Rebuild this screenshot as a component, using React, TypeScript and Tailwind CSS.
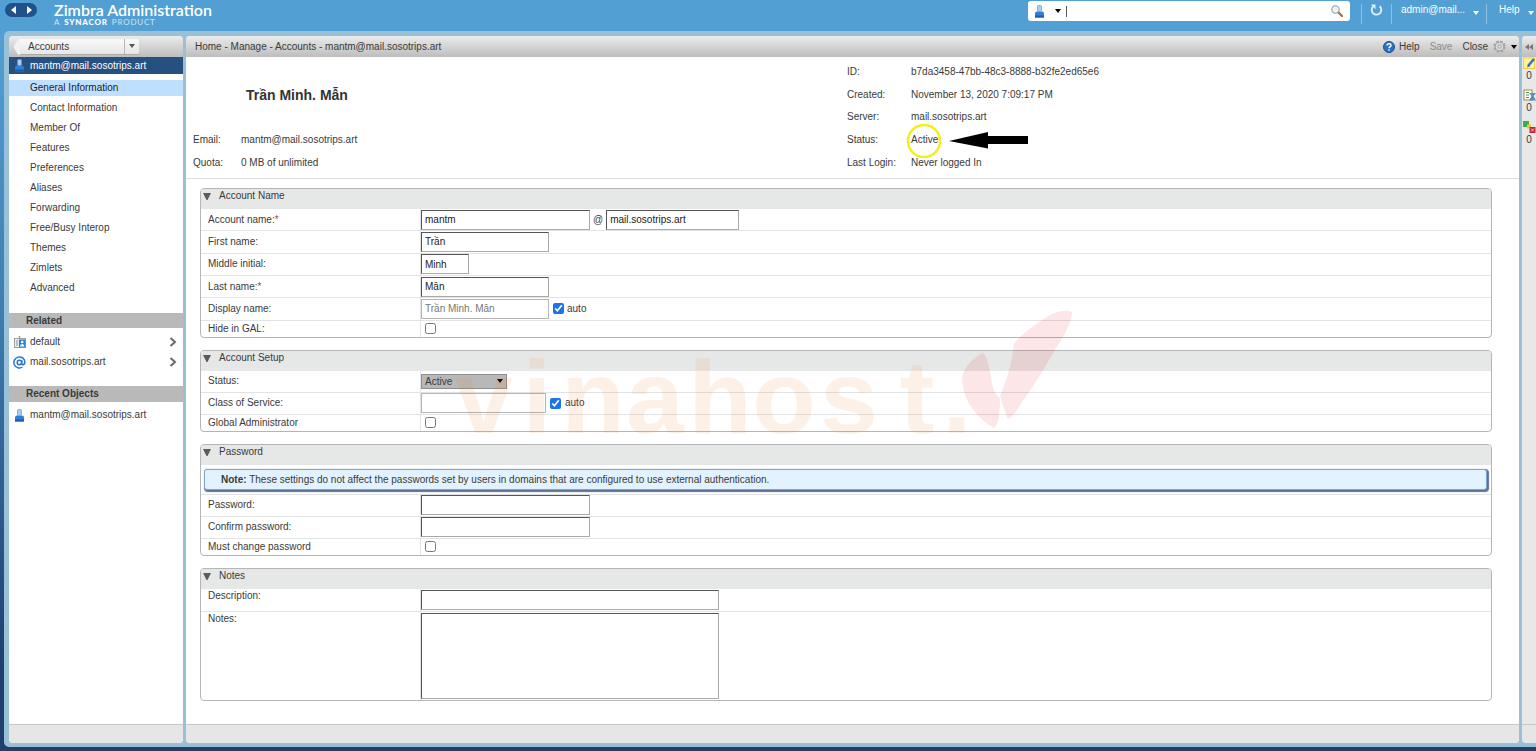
import type { ReactNode } from "react";

function PersonIcon() {
  return (
    <svg width="11" height="13" viewBox="0 0 11 13" aria-hidden="true" className="shrink-0">
      <path d="M1 12.5V8.5Q1 6.5 3 6.5H8Q10 6.5 10 8.5V12.5Z" fill="#2f7fd6" />
      <path d="M1 12.5V10.5H10V12.5Z" fill="#1a5cab" />
      <rect x="3.5" y="0.5" width="4" height="6" rx="1" fill="#a9cdf0" stroke="#5a9bdc" strokeWidth="0.7" />
    </svg>
  );
}

function Caret({ className }: { className: string }) {
  return (
    <svg width="6" height="4" viewBox="0 0 6 4" aria-hidden="true" className={`shrink-0 ${className}`}>
      <path d="M0 0H6L3 4Z" fill="currentColor" />
    </svg>
  );
}

function Chevron() {
  return (
    <svg width="8" height="10" viewBox="0 0 8 10" aria-hidden="true">
      <path d="M1.5 1L6 5L1.5 9" fill="none" stroke="#6a6a6a" strokeWidth="2" />
    </svg>
  );
}

function TopBar() {
  return (
    <header className="flex h-[31px] items-start text-white">
      <div className="flex w-[54px] shrink-0 pt-[3px] pl-[5px]">
        <div className="flex h-[14px] w-8 items-center justify-around rounded-full bg-[#215189]">
          <button aria-label="Back" className="flex">
            <svg width="5" height="8" viewBox="0 0 5 8"><path d="M5 0V8L0 4Z" fill="#fff" /></svg>
          </button>
          <button aria-label="Forward" className="flex">
            <svg width="5" height="8" viewBox="0 0 5 8"><path d="M0 0V8L5 4Z" fill="#fff" /></svg>
          </button>
        </div>
      </div>
      <div className="font-[Lato,sans-serif]">
        <div className="text-[16px] leading-[19px] font-semibold whitespace-nowrap">Zimbra Administration</div>
        <div className="flex gap-1 text-[8px] leading-[7px] tracking-widest text-[#cfe4f3]">
          <span>A</span> <b className="font-black text-white">SYNACOR</b> <span>PRODUCT</span>
        </div>
      </div>
      <div className="ml-auto mt-px flex h-5 w-[322px] items-center rounded-[3px] bg-white pr-[7px] pl-[6px]">
        <PersonIcon />
        <button aria-label="Search type" className="mr-[5px] ml-[10px] flex"><Caret className="text-black" /></button>
        <span className="h-[11px] w-px bg-[#555]" />
        <input aria-label="Search" className="h-4 min-w-0 flex-1 px-1 text-[#333] outline-none" />
        <button aria-label="Run search" className="flex">
          <svg width="12" height="12" viewBox="0 0 12 12">
            <path d="M7 7L11 11" stroke="#a87437" strokeWidth="2.4" strokeLinecap="round" />
            <circle cx="4.5" cy="4.5" r="3.7" fill="#edf3f7" stroke="#929aa0" strokeWidth="1.1" />
          </svg>
        </button>
      </div>
      <div className="mt-1 ml-[11px] flex h-5 w-[30px] justify-center border-l border-[#8fc0e2]">
        <button aria-label="Refresh" className="flex">
          <svg width="13" height="12" viewBox="0 0 13 12">
            <path d="M9.6 2.2A4.8 4.8 0 1 1 3.2 2.4" fill="none" stroke="#e3f0f9" strokeWidth="1.8" />
            <path d="M0.800 0.500H5.500V5.200Z" fill="#e3f0f9" />
          </svg>
        </button>
      </div>
      <button className="mt-1 flex h-5 w-[95px] justify-between border-l border-[#8fc0e2] pr-[7px] pl-[9px] leading-[12px]">
        admin@mail... <Caret className="mt-[7px] text-white" />
      </button>
      <button className="mt-1 flex h-5 w-[50px] justify-between border-l border-[#8fc0e2] pr-[2px] pl-3 leading-[12px]">
        Help <Caret className="mt-[7px] text-white" />
      </button>
    </header>
  );
}

const barClass = "h-[21px] shrink-0 bg-linear-to-b from-[#ececec] to-[#bdbdbd]";

function Footer() {
  return <div className="mt-auto h-[19px] shrink-0 border-t border-[#c4c6c7] bg-[#e6e6e6]" />;
}

const navItems = [
  "General Information", "Contact Information", "Member Of", "Features", "Preferences", "Aliases",
  "Forwarding", "Free/Busy Interop", "Themes", "Zimlets", "Advanced",
];

function SideLink({ icon, children, chevron }: { icon: ReactNode; children: ReactNode; chevron?: boolean }) {
  return (
    <a href="#object" className="flex h-5 items-center pr-[6px]">
      <span className="flex w-[21px] justify-center">{icon}</span>
      <span className="flex-1">{children}</span>
      {chevron && <Chevron />}
    </a>
  );
}

function Sidebar() {
  return (
    <aside className="flex w-[174px] shrink-0 flex-col overflow-hidden rounded-[4px] bg-white">
      <div className={`${barClass} flex items-center pl-1`}>
        <div className="flex items-center">
          <svg width="7" height="16" viewBox="0 0 7 16" aria-hidden="true">
            <path d="M7 0Q5 0 4 2L0.5 8L4 14Q5 16 7 16Z" fill="#f2f2f2" />
          </svg>
          <div className="flex h-4 w-[119px] rounded-r-[2px] border-b border-[#aaa] bg-linear-to-b from-[#fafafa] to-[#e6e6e6]">
            <button className="flex-1 pl-2 text-left leading-[15px]">Accounts</button>
            <button aria-label="Account menu" className="flex w-[15px] items-center justify-center border-l border-[#b5b5b5]">
              <Caret className="text-[#555]" />
            </button>
          </div>
        </div>
      </div>
      <a href="#account" className="flex h-[17px] items-center bg-[#26507f] text-white">
        <span className="flex w-[21px] justify-center"><PersonIcon /></span>
        mantm@mail.sosotrips.art
      </a>
      <nav className="mt-1 flex flex-col">
        {navItems.map((item, i) => (
          <a key={item} href="#section" className="flex h-5 items-center">
            <span className={i === 0 ? "h-4 flex-1 bg-[#bfdfff] pl-[21px] leading-4 text-[#222]" : "h-4 flex-1 pl-[21px] leading-4"}>{item}</span>
          </a>
        ))}
      </nav>
      <h2 className="mt-[15px] h-[15px] bg-[#b9b9b9] pl-[17px] leading-[15px] font-bold">Related</h2>
      <div className="mt-1">
        <SideLink
          chevron
          icon={
            <svg width="12" height="12" viewBox="0 0 12 12">
              <rect x="0.5" y="2.5" width="11" height="9" fill="#e9edf0" stroke="#9aa2a8" />
              <path d="M2 5H4M2 7H4M2 9H4" stroke="#8c959c" />
              <rect x="5" y="3.5" width="6.5" height="8" fill="#2b7fd8" />
              <circle cx="8.2" cy="6" r="1.3" fill="#fff" />
              <path d="M6 10.5Q6 8 8.2 8T10.4 10.5Z" fill="#fff" />
              <path d="M5.5 0V3" stroke="#c29155" strokeWidth="1.4" />
            </svg>
          }
        >
          default
        </SideLink>
        <SideLink
          chevron
          icon={
            <svg width="13" height="13" viewBox="0 0 13 13" fill="none" stroke="#2076cf" strokeWidth="1.5">
              <circle cx="6.4" cy="6.5" r="2.2" />
              <path d="M8.8 4.2V7.5Q9 9 10.3 8.7Q12 8 11.9 6A5.5 5.5 0 1 0 9.5 11" />
            </svg>
          }
        >
          mail.sosotrips.art
        </SideLink>
      </div>
      <h2 className="mt-[14px] h-4 bg-[#b9b9b9] pl-[17px] leading-4 font-bold">Recent Objects</h2>
      <div className="mt-[3px]">
        <SideLink icon={<PersonIcon />}>mantm@mail.sosotrips.art</SideLink>
      </div>
      <Footer />
    </aside>
  );
}

function Toolbar() {
  return (
    <div className={`${barClass} flex items-center pr-[2px] pl-[9px]`}>
      <span>Home - Manage - Accounts - mantm@mail.sosotrips.art</span>
      <button className="ml-auto flex items-center gap-1">
        <svg width="12" height="12" viewBox="0 0 12 12" aria-hidden="true">
          <circle cx="6" cy="6" r="5.5" fill="#2a6fc0" stroke="#1c4f92" />
          <path d="M4 4.6Q4 2.8 6 2.8T8 4.5Q8 5.5 6.8 6Q6 6.400 6 7.300M6 8.300V9.700" fill="none" stroke="#fff" strokeWidth="1.4" />
        </svg>
        Help
      </button>
      <button className="ml-[10px] text-[#8b8b8b]">Save</button>
      <button className="ml-[10px]">Close</button>
      <button aria-label="Options" className="ml-[5px] flex items-center gap-[5px]">
        <svg width="13" height="13" viewBox="0 0 13 13" fill="none" stroke="#a2a2a2">
          <circle cx="6.500" cy="6.500" r="5.200" strokeWidth="1.800" strokeDasharray="2.700 1.380" />
          <circle cx="6.500" cy="6.500" r="4.200" fill="#dedede" />
          <circle cx="6.500" cy="6.500" r="1.800" />
        </svg>
        <Caret className="text-black" />
      </button>
    </div>
  );
}

const details = [
  ["ID:", "b7da3458-47bb-48c3-8888-b32fe2ed65e6"],
  ["Created:", "November 13, 2020 7:09:17 PM"],
  ["Server:", "mail.sosotrips.art"],
  ["Status:", "Active"],
  ["Last Login:", "Never logged In"],
];

function Summary() {
  return (
    <section className="flex border-b border-[#dcdcdc] pt-1 pb-1 pl-[7px]">
      <div className="grid h-[113px] w-[654px] grid-cols-[48px_1fr] grid-rows-5 items-center">
        <span />
        <span />
        <h1 className="col-span-2 pl-[53px] text-[14px] font-bold text-[#333]">Trần Minh. Mẫn</h1>
        <span />
        <span />
        <span>Email:</span>
        <span>mantm@mail.sosotrips.art</span>
        <span>Quota:</span>
        <span>0 MB of unlimited</span>
      </div>
      <dl className="grid h-[113px] grid-rows-5 items-center">
        {details.map(([label, value]) => (
          <div key={label} className="flex">
            <dt className="w-[64px]">{label}</dt>
            <dd className="relative">
              {value}
              {label === "Status:" && (
                <svg width="126" height="36" viewBox="0 0 126 36" className="absolute -top-[10px] -left-[5px]" aria-hidden="true">
                  <circle cx="18" cy="18" r="16" fill="none" stroke="#f4ee1c" strokeWidth="2.500" />
                  <path d="M43 18L82 9V13H122V21H82V25.500Z" fill="#000" />
                </svg>
              )}
            </dd>
          </div>
        ))}
      </dl>
    </section>
  );
}

function Section({ title, body, children }: { title: string; body: string; children: ReactNode }) {
  return (
    <section className="overflow-hidden rounded-[4px] border border-[#b3b5b6]">
      <h2 className="flex h-5 bg-[#e6e8e8] leading-[13px]">
        <button aria-label={`Collapse ${title}`} className="flex w-[18px] items-start pt-1 pl-[2px]">
          <svg width="8" height="7" viewBox="0 0 8 7"><path d="M0 0H8L4.500 7H3.500Z" fill="#5b5b5b" /></svg>
        </button>
        {title}
      </h2>
      <div className={body}>{children}</div>
    </section>
  );
}

function Row({ label, id, required, top, children }: { label: string; id: string; required?: boolean; top?: boolean; children: ReactNode }) {
  return (
    <div className={`flex border-b border-[#e1e3e4] last:border-b-0 ${top ? "items-start" : "items-center"}`}>
      <label htmlFor={id} className="w-[219px] shrink-0 pl-[7px]">
        {label}
        {required && <span className="text-[#c33]">*</span>}
      </label>
      <div className={`flex self-stretch border-l border-[#e4e4e4] ${top ? "items-start pt-px" : "items-center"}`}>{children}</div>
    </div>
  );
}

const field = "h-5 border border-t-[#555] border-l-[#555] border-r-[#aaa] border-b-[#aaa] bg-white px-[3px] text-[#222] outline-none";
const softField = "h-5 border border-[#b5b5b5] bg-white px-[3px] text-[#777] outline-none";
const check = "m-0 size-[11px] accent-[#1a73e8]";

function Watermark() {
  return (
    <div className="pointer-events-none" aria-hidden="true">
      <div className="absolute top-[309px] left-[272px] grid grid-cols-[52px_54px_58px_66px_64px_64px_66px_70px_10px] font-['Liberation_Sans_Narrow','Liberation_Sans',sans-serif] text-[104px] leading-[104px] font-bold text-[#f58220] opacity-10">
        {"vinahost.".split("").map((c, i) => (
          <span key={i} className="flex justify-center">{c}</span>
        ))}
      </div>
      <svg width="114" height="126" viewBox="0 0 114 126" className="absolute top-[270px] left-[774px]">
        <path d="M22 47Q3 58 2 74Q4 92 12 102Q20 114 34 122Q40 118 40 92Q34 88 32 78Q28 48 22 47Z" fill="#e8303c" opacity="0.12" />
        <path d="M112 6Q106 2 92 8Q62 26 54 38Q52 62 40 90Q44 104 48 113Q52 112 62 96Q78 74 96 42Q112 18 112 6Z" fill="#e8303c" opacity="0.12" />
      </svg>
    </div>
  );
}

function AccountForm() {
  return (
    <form className="mt-[9px] mr-[27px] mb-4 ml-[14px] flex flex-col gap-3">
      <Section title="Account Name" body="grid h-32 grid-rows-[repeat(5,45fr)_33fr]">
        <Row label="Account name:" id="account" required>
          <input id="account" defaultValue="mantm" className={`${field} w-[169px]`} />
          <span className="px-[3px]">@</span>
          <input aria-label="Domain" defaultValue="mail.sosotrips.art" className={`${field} w-[133px]`} />
        </Row>
        <Row label="First name:" id="first"><input id="first" defaultValue="Trần" className={`${field} w-32`} /></Row>
        <Row label="Middle initial:" id="middle"><input id="middle" defaultValue="Minh" className={`${field} w-12`} /></Row>
        <Row label="Last name:" id="last" required><input id="last" defaultValue="Mẫn" className={`${field} w-32`} /></Row>
        <Row label="Display name:" id="display">
          <input id="display" defaultValue="Trần Minh. Mẫn" className={`${softField} w-32`} />
          <label className="ml-1 flex items-center gap-[3px]"><input type="checkbox" defaultChecked className={check} />auto</label>
        </Row>
        <Row label="Hide in GAL:" id="gal"><span className="flex pl-1"><input id="gal" type="checkbox" className={check} /></span></Row>
      </Section>
      <Section title="Account Setup" body="grid h-[60px] grid-rows-[45fr_45fr_33fr]">
        <Row label="Status:" id="status">
          <span className="relative flex items-center">
            <select id="status" className="h-[15px] w-[86px] appearance-none border border-[#8e8e8e] bg-[#b8b8b8] px-[3px] leading-[13px]">
              <option>Active</option>
            </select>
            <Caret className="pointer-events-none absolute right-1 text-black" />
          </span>
        </Row>
        <Row label="Class of Service:" id="cos">
          <input id="cos" className={`${softField} w-[125px]`} />
          <label className="ml-1 flex items-center gap-1"><input type="checkbox" defaultChecked className={check} />auto</label>
        </Row>
        <Row label="Global Administrator" id="global"><span className="flex pl-1"><input id="global" type="checkbox" className={check} /></span></Row>
      </Section>
      <Section title="Password" body="grid h-[90px] grid-rows-[30px_45fr_45fr_33fr]">
        <div className="border-b border-[#e1e3e4] pt-1 pr-1 pl-[3px]">
          <p className="h-[21px] rounded-[3px] border border-[#7fa6d0] bg-[#e2f3ff] pl-4 leading-[19px] shadow-[1px_1px_1px_1px_#5c6f94]">
            <b>Note:</b> These settings do not affect the passwords set by users in domains that are configured to use external authentication.
          </p>
        </div>
        <Row label="Password:" id="pw"><input id="pw" type="password" className={`${field} w-[169px]`} /></Row>
        <Row label="Confirm password:" id="pw2"><input id="pw2" type="password" className={`${field} w-[169px]`} /></Row>
        <Row label="Must change password" id="must"><span className="flex pl-1"><input id="must" type="checkbox" className={check} /></span></Row>
      </Section>
      <Section title="Notes" body="grid grid-rows-[23px_88px]">
        <Row label="Description:" id="desc" top><input id="desc" className={`${field} w-[298px]`} /></Row>
        <Row label="Notes:" id="notes" top>
          <textarea id="notes" className="h-[86px] w-[298px] resize-none border border-t-[#555] border-r-[#aaa] border-b-[#aaa] border-l-[#555] bg-white p-[3px] outline-none" />
        </Row>
      </Section>
    </form>
  );
}

function RightStrip() {
  const icons = [
    <svg key="note" width="13" height="12" viewBox="0 0 13 12">
      <rect x="0.500" y="1" width="11" height="10.500" fill="#fff09a" stroke="#e8cf57" />
      <path d="M5 9L11 2" stroke="#3277c4" strokeWidth="2.600" />
      <path d="M4 10.500L5.500 7.500L7 9Z" fill="#555" />
    </svg>,
    <svg key="book" width="13" height="12" viewBox="0 0 13 12">
      <rect x="1" y="1" width="8" height="10" fill="#fff" stroke="#a8834a" />
      <path d="M3 3.500H6M3 6H6M3 8.500H6" stroke="#4f9a5a" />
      <path d="M6 4H13L10.500 7L13 11.500H6L8.500 7Z" fill="#5492bd" />
    </svg>,
    <svg key="sync" width="13" height="12" viewBox="0 0 13 12">
      <rect width="6" height="6" fill="#3fae49" />
      <rect x="4" y="3.500" width="4" height="4" fill="#f3c530" />
      <rect x="6.500" y="6" width="6" height="6" fill="#b82733" />
      <path d="M8 7.500L11 10.500M11 7.500L8 10.500" stroke="#fff" strokeWidth="0.700" />
    </svg>,
  ];
  return (
    <aside className="flex w-[14px] shrink-0 flex-col overflow-hidden rounded-l-[4px] bg-[#e8e8e8]">
      <button aria-label="Expand" className={`${barClass} flex items-center justify-center`}>
        <svg width="8" height="6" viewBox="0 0 8 6"><path d="M4 0V6L0 3ZM8 0V6L4 3Z" fill="#777" /></svg>
      </button>
      {icons.map((icon, i) => (
        <div key={i} className="flex h-8 flex-col items-center">
          {icon}
          <span className="leading-[14px]">0</span>
        </div>
      ))}
      <Footer />
    </aside>
  );
}

export default function App() {
  return (
    <div className="flex min-h-screen flex-col bg-linear-to-b from-[#519fd3] from-5% via-[#3f7fb5] via-40% to-[#1f3f6c] to-90% font-['Liberation_Sans',Arial,sans-serif] text-[10px] leading-[14px] text-[#3a3a3a]">
      <div className="bg-[#519fd3]"><TopBar /></div>
      <div className="mb-1 ml-1 flex flex-1 gap-[3px] rounded-l-[5px] bg-[#98c1d7] pt-[5px] pb-1 pl-[5px]">
        <Sidebar />
        <main className="relative flex min-w-0 flex-1 flex-col overflow-hidden rounded-[4px] bg-white">
          <Toolbar />
          <Summary />
          <AccountForm />
          <Footer />
          <Watermark />
        </main>
        <RightStrip />
      </div>
    </div>
  );
}
